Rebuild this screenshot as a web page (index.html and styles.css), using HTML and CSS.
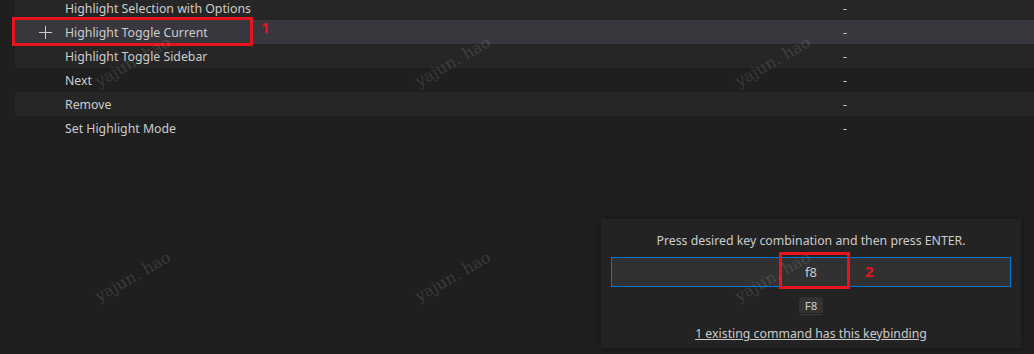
FILE: index.html
```html
<!DOCTYPE html>
<html lang="en">
<head>
    <meta charset="UTF-8">
    <title>Keybindings</title>
    <link rel="stylesheet" href="styles.css">
</head>
<body>
    <div class="list">
        <div class="row light">
            <span class="actions"></span>
            <span class="command">Highlight Selection with Options</span>
            <span class="keys">-</span>
        </div>
        <div class="row focused">
            <span class="actions">
                <svg width="16" height="16" viewBox="0 0 16 16"><path d="M14 7v1H8v6H7V8H1V7h6V1h1v6h6z" fill="#cccccc"/></svg>
            </span>
            <span class="command">Highlight Toggle Current</span>
            <span class="keys">-</span>
        </div>
        <div class="row light">
            <span class="actions"></span>
            <span class="command">Highlight Toggle Sidebar</span>
            <span class="keys">-</span>
        </div>
        <div class="row">
            <span class="actions"></span>
            <span class="command">Next</span>
            <span class="keys">-</span>
        </div>
        <div class="row light">
            <span class="actions"></span>
            <span class="command">Remove</span>
            <span class="keys">-</span>
        </div>
        <div class="row">
            <span class="actions"></span>
            <span class="command">Set Highlight Mode</span>
            <span class="keys">-</span>
        </div>
    </div>

    <!-- callout 1 -->
    <div class="callout box-one"></div>
    <div class="callout-num num-one">1</div>

    <!-- define keybinding widget -->
    <div class="dialog">
        <div class="message">Press desired key combination and then press ENTER.</div>
        <div class="key-input">f8</div>
        <div class="label-row"><span class="keylabel">F8</span></div>
        <a class="existing" href="#">1 existing command has this keybinding</a>
    </div>

    <!-- callout 2 -->
    <div class="callout box-two"></div>
    <div class="callout-num num-two">2</div>

    <div class="watermark" style="left: 80px; top: 51px;">yajun. hao</div>
    <div class="watermark" style="left: 400px; top: 51px;">yajun. hao</div>
    <div class="watermark" style="left: 720px; top: 51px;">yajun. hao</div>
    <div class="watermark" style="left: 80px; top: 266px;">yajun. hao</div>
    <div class="watermark" style="left: 400px; top: 266px;">yajun. hao</div>
    <div class="watermark" style="left: 720px; top: 266px;">yajun. hao</div>
</body>
</html>
```

FILE: styles.css
```css
body {
    margin: 0;
    background-color: #1f1f1f;
    color: #cccccc;
    font-family: 'Noto Sans', 'Open Sans', sans-serif;
    font-size: 12.3px;
    width: 1034px;
    height: 354px;
    overflow: hidden;
    position: relative;
}

.list {
    margin-top: -4px;
    margin-left: 15px;
}

.row {
    display: grid;
    grid-template-columns: 50px 778px 1fr;
    align-items: center;
    height: 24px;
    box-sizing: border-box;
    padding-top: 1px;
    line-height: 23px;
    white-space: nowrap;
}

.row.light {
    background-color: #262626;
}

.row.focused {
    background-color: #37373d;
}

.actions {
    display: flex;
    justify-content: flex-end;
    padding-right: 11px;
    height: 23px;
    align-items: center;
}

.actions svg {
    display: block;
}

/* red annotation boxes */
.callout {
    position: absolute;
    border: 3px solid #e5141e;
    box-sizing: border-box;
}

.box-one {
    left: 12px;
    top: 17px;
    width: 241px;
    height: 29px;
}

.box-two {
    left: 779px;
    top: 252px;
    width: 71px;
    height: 37px;
}

.callout-num {
    position: absolute;
    color: #e5141e;
    font-family: 'Open Sans', sans-serif;
    font-weight: 700;
    font-size: 15px;
    line-height: 16px;
}

.num-one {
    left: 261px;
    top: 19px;
}

.num-two {
    left: 865px;
    top: 263px;
}

.dialog {
    position: absolute;
    left: 601px;
    top: 219px;
    width: 420px;
    height: 129px;
    box-sizing: border-box;
    background-color: #232323;
    box-shadow: 0 0 8px rgba(0, 0, 0, 0.36);
    padding: 13px 10px 0;
    text-align: center;
}

.message {
    line-height: 18px;
}

.key-input {
    margin-top: 7px;
    height: 30px;
    box-sizing: border-box;
    border: 1px solid #0078d4;
    background-color: #313131;
    line-height: 29px;
    font-size: 13px;
}

.label-row {
    margin-top: 10px;
    height: 18px;
}

.keylabel {
    display: inline-block;
    box-sizing: border-box;
    height: 18px;
    padding: 0 5px;
    font-size: 11.5px;
    line-height: 16px;
    background-color: rgba(128, 128, 128, 0.17);
    border: 1px solid rgba(51, 51, 51, 0.6);
    border-bottom-color: rgba(68, 68, 68, 0.6);
    border-radius: 3px;
    box-shadow: inset 0 -1px 0 rgba(0, 0, 0, 0.36);
}

.existing {
    display: inline-block;
    margin-top: 10px;
    line-height: 18px;
    color: #cccccc;
    text-decoration: underline;
}

.watermark {
    position: absolute;
    width: 106px;
    height: 22px;
    font-family: 'DejaVu Serif', serif;
    font-size: 16px;
    line-height: 22px;
    text-align: center;
    color: rgba(255, 255, 255, 0.13);
    white-space: nowrap;
    transform: rotate(-30deg);
    pointer-events: none;
}
```
